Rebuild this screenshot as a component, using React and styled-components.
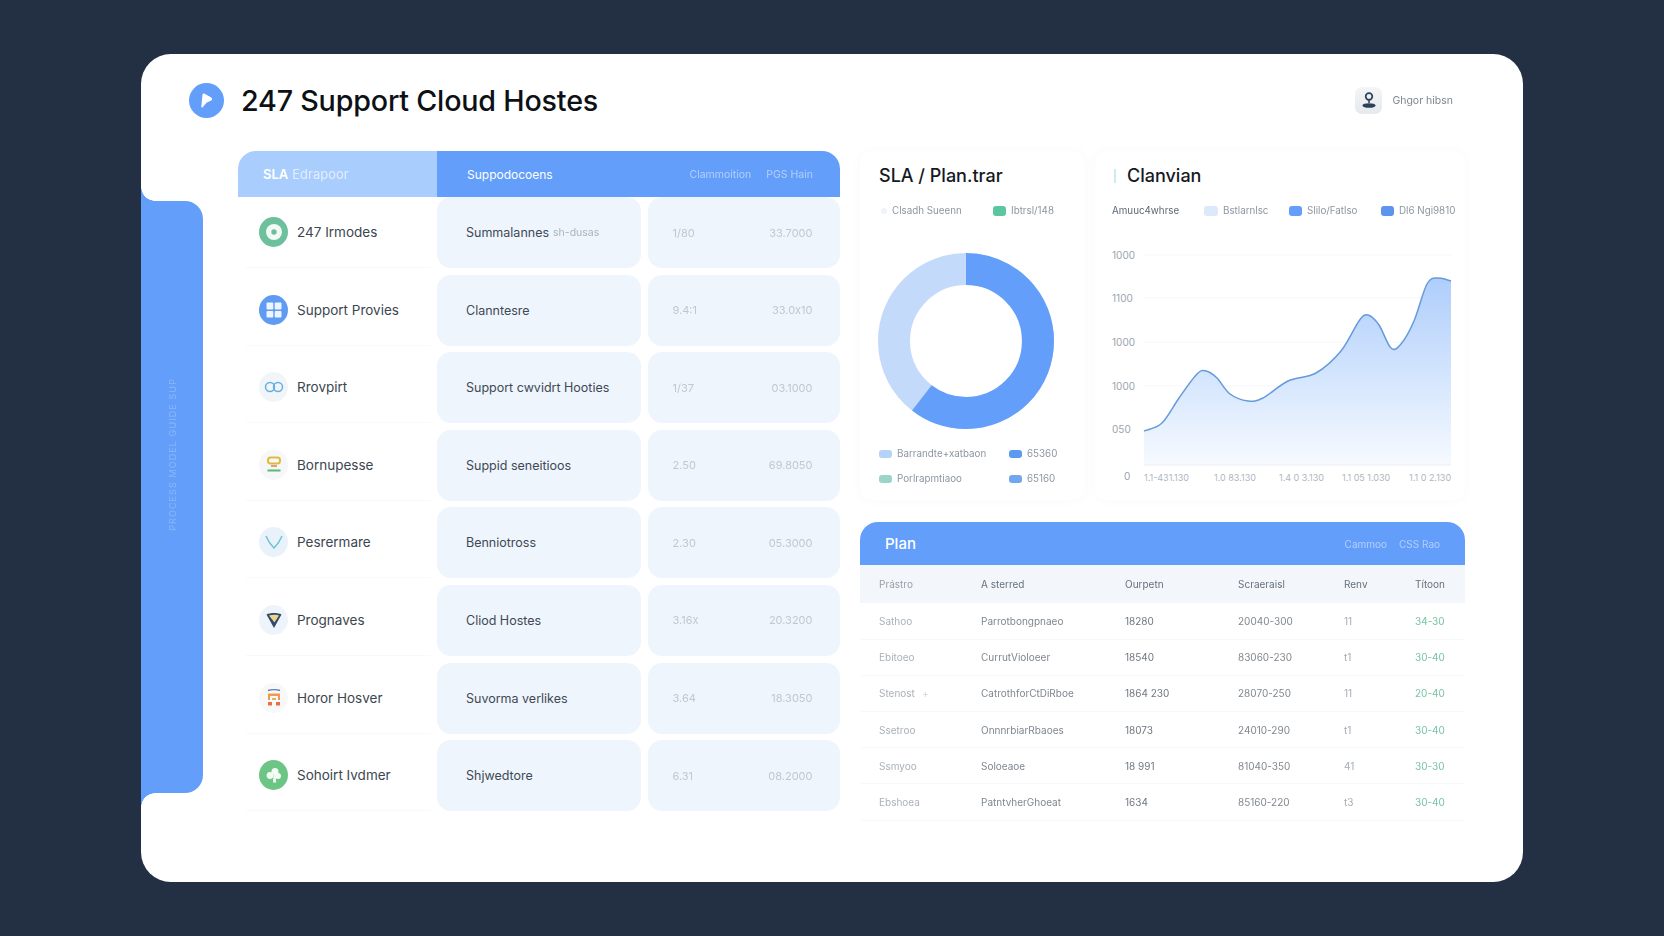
import React from 'react';
import styled, { createGlobalStyle } from 'styled-components';

const Global = createGlobalStyle`
    html, body {
        margin: 0;
        padding: 0;
        background: #233044;
        font-family: "Inter", "Liberation Sans", sans-serif;
    }
`

const Page = styled.div`
    width: 1664px;
    height: 936px;
    box-sizing: border-box;
    padding: 54px 141px;
    overflow: hidden;
`

const Card = styled.div`
    width: 1382px;
    height: 828px;
    background: #fff;
    border-radius: 30px;
    overflow: hidden;
`

const Header = styled.header`
    height: 97px;
    display: flex;
    align-items: center;
    padding: 0 70px 5px 48px;
    box-sizing: border-box;
`

const Logo = styled.div`
    width: 35px;
    height: 35px;
    border-radius: 50%;
    background: #639efa;
    display: flex;
    align-items: center;
    justify-content: center;
`

const Title = styled.h1`
    margin: 0 0 0 17px;
    font-size: 28.7px;
    font-weight: 500;
    letter-spacing: -0.2px;
    color: #0d1116;
`

const User = styled.div`
    margin-left: auto;
    display: flex;
    align-items: center;
    gap: 10px;
    font-size: 10.5px;
    color: #7d8791;
    filter: blur(0.3px);
`

const Avatar = styled.div`
    width: 27px;
    height: 27px;
    border-radius: 7px;
    background: linear-gradient(#f3f5f7, #e6e9ed);
    display: flex;
    align-items: center;
    justify-content: center;
`

const Body = styled.div`
    display: flex;
    align-items: flex-start;
`

const Rail = styled.aside`
    position: relative;
    width: 62px;
    height: 592px;
    margin-top: 50px;
    background: #639efa;
    border-radius: 0 18px 18px 0;
    display: flex;
    align-items: center;
    justify-content: center;

    &::before, &::after {
        content: "";
        position: absolute;
        left: 0;
        width: 14px;
        height: 14px;
    }
    &::before {
        top: -14px;
        background: radial-gradient(circle at 100% 0, #fff 13.5px, #639efa 14px);
    }
    &::after {
        bottom: -14px;
        background: radial-gradient(circle at 100% 100%, #fff 13.5px, #639efa 14px);
    }
`

const RailText = styled.span`
    writing-mode: vertical-rl;
    transform: rotate(180deg);
    font-size: 9px;
    letter-spacing: 1.1px;
    color: rgba(255, 255, 255, 0.26);
    margin-bottom: 85px;
    white-space: nowrap;
    filter: blur(0.4px);
`

const SlaTable = styled.section`
    width: 602px;
    margin-left: 35px;
`

const TableHead = styled.div`
    display: grid;
    grid-template-columns: 199px 1fr;
    height: 46px;
    font-size: 12px;
    color: #fff;
`

const HeadLeft = styled.div`
    background: #a9cdfc;
    border-radius: 18px 0 0 0;
    padding-left: 25px;
    font-size: 13px;
    display: flex;
    align-items: center;
    gap: 4px;

    & b {
        font-weight: 600;
    }
    & span {
        opacity: 0.65;
    }
`

const HeadRight = styled.div`
    background: #639efa;
    border-radius: 0 18px 0 0;
    padding: 0 27px 0 30px;
    display: flex;
    align-items: center;

    & small {
        font-size: 10.5px;
        color: rgba(255, 255, 255, 0.5);
        filter: blur(0.3px);
    }
    & small:first-of-type {
        margin-left: auto;
        margin-right: 15px;
    }
`

const Rows = styled.div`
    display: grid;
    grid-auto-rows: 71px;
    row-gap: 6.6px;
`

const Row = styled.div`
    display: grid;
    grid-template-columns: 192.5px 204px 192px;
    column-gap: 6.5px;
`

const NameCell = styled.div`
    display: flex;
    align-items: center;
    gap: 9px;
    margin-left: 8px;
    padding-left: 13px;
    font-size: 13.5px;
    color: #3c4650;
    border-bottom: 1px solid #f7f9fb;
`

const Badge = styled.div`
    width: 29px;
    height: 30px;
    flex: none;
    border-radius: 50%;
    background: ${(p) => p.$bg};
    display: flex;
    align-items: center;
    justify-content: center;
`

const Pill = styled.div`
    background: #eef5fd;
    border-radius: 14px;
    display: flex;
    align-items: center;
    justify-content: ${(p) => (p.$split ? 'space-between' : 'flex-start')};
    padding: ${(p) => (p.$split ? '0 27px 0 25px' : '0 0 0 29px')};
    font-size: ${(p) => (p.$split ? '11px' : '12.5px')};
    color: ${(p) => (p.$split ? '#bfc8d2' : '#3f4955')};

    & em {
        font-style: normal;
        font-size: 10.5px;
        margin-left: 4px;
        color: #aab4bf;
        filter: blur(0.4px);
    }
    & span {
        filter: blur(0.3px);
    }
`

const RightCol = styled.div`
    width: 605px;
    margin-left: 20px;
`

const Charts = styled.div`
    display: flex;
    gap: 10px;
    height: 349px;
`

const Panel = styled.div`
    box-sizing: border-box;
    width: ${(p) => p.$width}px;
    padding-top: 13px;
    border-radius: 12px;
    box-shadow: 0 0 10px rgba(225, 232, 240, 0.28);
`

const PanelTitle = styled.h2`
    margin: 0;
    padding-left: ${(p) => p.$left}px;
    display: flex;
    align-items: center;
    gap: 11px;
    font-size: 18px;
    line-height: 24px;
    font-weight: 500;
    color: #15191f;

    & i {
        width: 2px;
        height: 14px;
        background: #c8ecf0;
    }
`

const Legend = styled.div`
    height: 12px;
    margin-top: ${(p) => p.$top}px;
    padding-left: ${(p) => p.$left}px;
    display: flex;
    align-items: center;
    font-size: 9.8px;
    line-height: 12px;
    color: #8b96a1;
    filter: blur(0.3px);
`

const LegendItem = styled.span`
    width: ${(p) => p.$width}px;
    flex: none;
    display: flex;
    align-items: center;
    gap: 5px;
    white-space: nowrap;
    color: ${(p) => p.$color || 'inherit'};
`

const Swatch = styled.i`
    width: ${(p) => p.$w || 13}px;
    height: ${(p) => p.$h || 10}px;
    flex: none;
    border-radius: 3px;
    background: ${(p) => p.$color};
`

const DonutWrap = styled.div`
    margin: 36px 0 20px 18px;
    height: 176px;
    line-height: 0;
`

const ChartWrap = styled.div`
    margin-top: 24px;
    line-height: 0;
`

const PlanBox = styled.section`
    margin-top: 22px;
`

const PlanHead = styled.div`
    height: 43px;
    box-sizing: border-box;
    padding: 0 25px;
    background: #639efa;
    border-radius: 18px 18px 0 0;
    display: flex;
    align-items: center;
    color: #fff;
    font-size: 15px;
    font-weight: 500;

    & small {
        font-size: 10px;
        font-weight: 400;
        color: rgba(255, 255, 255, 0.5);
        filter: blur(0.3px);
    }
    & small:first-of-type {
        margin-left: auto;
        margin-right: 12px;
    }
`

const PlanRow = styled.div`
    display: grid;
    grid-template-columns: 102px 144px 113px 106px 71px 1fr;
    align-items: center;
    height: ${(p) => (p.$head ? '38.4px' : '36.2px')};
    box-sizing: border-box;
    padding-left: 19px;
    font-size: 10px;
    background: ${(p) => (p.$head ? '#f3f6fa' : '#fff')};
    border-bottom: ${(p) => (p.$head ? 'none' : '1px solid #f8f9fb')};
`

const PlanCell = styled.span`
    color: ${(p) => p.$color};
    white-space: nowrap;
    filter: blur(0.3px);
`

const Tag = styled.i`
    font-style: normal;
    margin-left: 7px;
    color: #cfd6dc;
`

const BadgeIcon = ({ kind }) => {
    if (kind === 'ring') {
        return (
            <svg width="18" height="18" viewBox="0 0 18 18">
                <circle cx="9" cy="9" r="8" fill="#f2faf6" />
                <circle cx="9" cy="9" r="2.700" fill="#6cbf9a" />
            </svg>
        );
    }
    if (kind === 'grid') {
        return (
            <svg width="18" height="18" viewBox="0 0 18 18" fill="#eef5ff">
                <rect x="1.500" y="1.500" width="6.800" height="7" rx="1" />
                <rect x="9.700" y="1.500" width="6.800" height="7" rx="1" />
                <rect x="1.500" y="10" width="6.800" height="6.500" rx="1" />
                <rect x="9.700" y="10" width="6.800" height="6.500" rx="1" />
            </svg>
        );
    }
    if (kind === 'link') {
        return (
            <svg width="20" height="14" viewBox="0 0 20 14" fill="none" stroke="#62b1e0" strokeWidth="1.500">
                <rect x="1.500" y="2.500" width="9" height="9" rx="4.500" />
                <rect x="9.500" y="2.500" width="9" height="9" rx="4.500" />
            </svg>
        );
    }
    if (kind === 'stack') {
        return (
            <svg width="18" height="20" viewBox="0 0 18 20" fill="none">
                <rect x="3" y="2.500" width="12" height="6" rx="2.500" stroke="#e2b93f" strokeWidth="2" />
                <path d="M6 11h6" stroke="#d98e4b" strokeWidth="1.600" />
                <path d="M2.500 15.500h13" stroke="#58b878" strokeWidth="2" />
            </svg>
        );
    }
    if (kind === 'check') {
        return (
            <svg width="20" height="18" viewBox="0 0 20 18" fill="none" stroke="#67c2d3" strokeWidth="1.400">
                <path d="M2 3C4 8 7 12 10 15C13 12 16 8 18 3" />
            </svg>
        );
    }
    if (kind === 'gem') {
        return (
            <svg width="18" height="18" viewBox="0 0 18 18">
                <path d="M1.500 3.500C5 1.500 13 1.500 16.500 3.500L9 17z" fill="#33496b" />
                <path d="M4 4.500C7 3.500 12 3.500 14 4.500L9.500 11.500z" fill="#ecd68f" />
            </svg>
        );
    }
    if (kind === 'bars') {
        return (
            <svg width="16" height="20" viewBox="0 0 16 20" fill="none">
                <path d="M2 2.500C5 1.500 11 1.500 14 2.500" stroke="#5b7fc0" strokeWidth="1.400" />
                <rect x="2" y="5.500" width="12" height="2.500" fill="#ef9a4d" />
                <path d="M3 8v4M13 8v4" stroke="#ef9a4d" strokeWidth="2" />
                <rect x="6" y="10" width="4" height="2" fill="#e1b45a" />
                <rect x="2" y="14" width="4" height="3.500" fill="#e86f45" />
                <rect x="10" y="14" width="4" height="3.500" fill="#e86f45" />
            </svg>
        );
    }
    return (
        <svg width="18" height="18" viewBox="0 0 18 18" fill="#f2fbf4">
            <circle cx="5" cy="9.500" r="3.400" />
            <circle cx="10" cy="5.500" r="3.500" />
            <circle cx="13" cy="10" r="3" />
            <path d="M8.500 8h2l.7 8.500H8z" />
        </svg>
    );
};

const slaRows = [
    { icon: 'ring', bg: '#6cc09c', name: '247 Irmodes', plan: 'Summalannes', note: 'sh-dusas', a: '1/80', b: '33.7000' },
    { icon: 'grid', bg: '#5f9bf3', name: 'Support Provies', plan: 'Clanntesre', a: '9.4:1', b: '33.0x10' },
    { icon: 'link', bg: '#f2f5f8', name: 'Rrovpirt', plan: 'Support cwvidrt Hooties', a: '1/37', b: '03.1000' },
    { icon: 'stack', bg: '#f5f7f8', name: 'Bornupesse', plan: 'Suppid seneitioos', a: '2.50', b: '69.8050' },
    { icon: 'check', bg: '#e9f2fb', name: 'Pesrermare', plan: 'Benniotross', a: '2.30', b: '05.3000' },
    { icon: 'gem', bg: '#eef4fb', name: 'Prognaves', plan: 'Cliod Hostes', a: '3.16x', b: '20.3200' },
    { icon: 'bars', bg: '#f8f8f9', name: 'Horor Hosver', plan: 'Suvorma verlikes', a: '3.64', b: '18.3050' },
    { icon: 'clover', bg: '#6cc485', name: 'Sohoirt Ivdmer', plan: 'Shjwedtore', a: '6.31', b: '08.2000' },
];

const planRows = [
    ['Sathoo', 'Parrotbongpnaeo', '18280', '20040-300', '11', '34-30'],
    ['Ebitoeo', 'CurrutVioloeer', '18540', '83060-230', 't1', '30-40'],
    ['Stenost', 'CatrothforCtDiRboe', '1864 230', '28070-250', '11', '20-40'],
    ['Ssetroo', 'OnnnrbiarRbaoes', '18073', '24010-290', 't1', '30-40'],
    ['Ssmyoo', 'Soloeaoe', '18 991', '81040-350', '41', '30-30'],
    ['Ebshoea', 'PatntvherGhoeat', '1634', '85160-220', 't3', '30-40'],
];

const planColors = ['#aab1b9', '#7f8790', '#6f7780', '#80888f', '#a5adb5', '#79c4a4'];

// measured points of the area line, in chart coordinates
const linePoints = [
    [49, 190], [67, 182], [84, 157], [102, 133], [111, 130], [122, 137], [135, 153], [153, 160],
    [168, 157], [193, 140], [221, 132], [246, 110], [264, 80], [273, 74], [284, 84], [296, 107],
    [306, 103], [319, 80], [332, 43], [343, 37], [356, 40],
];

const smooth = (pts) => {
    let d = `M${pts[0][0]} ${pts[0][1]}`;
    for (let i = 0; i < pts.length - 1; i++) {
        const p0 = pts[i - 1] || pts[i];
        const p1 = pts[i];
        const p2 = pts[i + 1];
        const p3 = pts[i + 2] || p2;
        const c1 = [p1[0] + (p2[0] - p0[0]) / 6, p1[1] + (p2[1] - p0[1]) / 6];
        const c2 = [p2[0] - (p3[0] - p1[0]) / 6, p2[1] - (p3[1] - p1[1]) / 6];
        d += ` C${c1[0].toFixed(1)} ${c1[1].toFixed(1)} ${c2[0].toFixed(1)} ${c2[1].toFixed(1)} ${p2[0]} ${p2[1]}`;
    }
    return d;
};

const AreaChart = () => {
    const line = smooth(linePoints);
    const yLabels = [['1000', 18], ['1100', 61], ['1000', 105], ['1000', 149], ['050', 192]];
    const xLabels = [['1.1-431.130', 49], ['1.0 83.130', 119], ['1.4 0 3.130', 184], ['1.1 05 1.030', 247], ['1.1 0 2.130', 314]];
    return (
        <svg width="370" height="250" viewBox="0 0 370 250" style={{ display: 'block', fontFamily: 'Inter, sans-serif' }}>
            <defs>
                <linearGradient id="areaFill" x1="0" y1="0" x2="0" y2="1">
                    <stop offset="0" stopColor="#aecefb" />
                    <stop offset="1" stopColor="#f6faff" />
                </linearGradient>
            </defs>
            {yLabels.map(([t, y], i) => (
                <g key={i}>
                    <line x1="49" x2="356" y1={y - 4} y2={y - 4} stroke="#f5f7fa" />
                    <text x="17" y={y} fontSize="10" fill="#9aa4ae">{t}</text>
                </g>
            ))}
            <path d={`${line} L356 224 L49 224 Z`} fill="url(#areaFill)" />
            <path d={line} fill="none" stroke="#669ada" strokeWidth="1.500" />
            <line x1="49" x2="356" y1="224" y2="224" stroke="#eaeef3" />
            <text x="29" y="239" fontSize="10" fill="#9aa4ae">0</text>
            {xLabels.map(([t, x], i) => (
                <text key={i} x={x} y="240" fontSize="9" fill="#aeb6bf">{t}</text>
            ))}
        </svg>
    );
};

export default function App() {
    return (
        <>
            <Global />
            <Page>
                <Card>
                    <Header>
                        <Logo>
                            <svg width="19" height="19" viewBox="0 0 19 19">
                                <path d="M5.500 3.500c.1-.9.900-1.300 1.700-.9l7 3.800c1.300.7 1.300 2.300 0 3l-4.700 2.400-3.600 4.300c-.7.800-1.700.3-1.600-.7z" fill="#fff" />
                            </svg>
                        </Logo>
                        <Title>247 Support Cloud Hostes</Title>
                        <User>
                            <Avatar>
                                <svg width="18" height="20" viewBox="0 0 18 20" fill="none">
                                    <circle cx="9" cy="6.500" r="3.300" stroke="#2c405c" strokeWidth="1.700" />
                                    <path d="M9 10v3" stroke="#2c405c" strokeWidth="1.500" />
                                    <ellipse cx="9" cy="15.500" rx="6.500" ry="2.300" fill="#2c405c" />
                                </svg>
                            </Avatar>
                            Ghgor hibsn
                        </User>
                    </Header>
                    <Body>
                        <Rail>
                            <RailText>PROCESS MODEL GUIDE SUP</RailText>
                        </Rail>
                        <SlaTable>
                            <TableHead>
                                <HeadLeft><b>SLA</b><span>Edrapoor</span></HeadLeft>
                                <HeadRight>
                                    Suppodocoens
                                    <small>Clammoition</small>
                                    <small>PGS Hain</small>
                                </HeadRight>
                            </TableHead>
                            <Rows>
                                {slaRows.map((r) => (
                                    <Row key={r.name}>
                                        <NameCell>
                                            <Badge $bg={r.bg}><BadgeIcon kind={r.icon} /></Badge>
                                            {r.name}
                                        </NameCell>
                                        <Pill>{r.plan}{r.note && <em>{r.note}</em>}</Pill>
                                        <Pill $split><span>{r.a}</span><span>{r.b}</span></Pill>
                                    </Row>
                                ))}
                            </Rows>
                        </SlaTable>
                        <RightCol>
                            <Charts>
                                <Panel $width={225}>
                                    <PanelTitle $left={19}>SLA / Plan.trar</PanelTitle>
                                    <Legend $top={17} $left={21}>
                                        <LegendItem $width={112}>
                                            <Swatch $w={6} $h={6} $color="#f0f3f6" />Clsadh Sueenn
                                        </LegendItem>
                                        <LegendItem $width={80}>
                                            <Swatch $color="#5cc6a0" />Ibtrsl/148
                                        </LegendItem>
                                    </Legend>
                                    <DonutWrap>
                                        <svg width="176" height="176" viewBox="0 0 176 176">
                                            <circle cx="88" cy="88" r="72" fill="none" stroke="#c4dafa" strokeWidth="32" />
                                            <circle
                                                cx="88"
                                                cy="88"
                                                r="72"
                                                fill="none"
                                                stroke="#639efa"
                                                strokeWidth="32"
                                                strokeDasharray="273.300 452.400"
                                                transform="rotate(-90 88 88)"
                                            />
                                        </svg>
                                    </DonutWrap>
                                    <Legend $top={-1} $left={19}>
                                        <LegendItem $width={130}>
                                            <Swatch $h={8} $color="#b5d2f8" />Barrandte+xatbaon
                                        </LegendItem>
                                        <LegendItem $width={60}>
                                            <Swatch $h={8} $color="#5b9af0" />65360
                                        </LegendItem>
                                    </Legend>
                                    <Legend $top={13} $left={19}>
                                        <LegendItem $width={130}>
                                            <Swatch $h={8} $color="#9bd4c8" />Porlrapmtiaoo
                                        </LegendItem>
                                        <LegendItem $width={60}>
                                            <Swatch $h={8} $color="#72a6ee" />65160
                                        </LegendItem>
                                    </Legend>
                                </Panel>
                                <Panel $width={370}>
                                    <PanelTitle $left={19}><i />Clanvian</PanelTitle>
                                    <Legend $top={17} $left={17}>
                                        <LegendItem $width={92} $color="#5d6873">Amuuc4whrse</LegendItem>
                                        <LegendItem $width={85}>
                                            <Swatch $w={14} $color="#dbe9fb" />Bstlarnlsc
                                        </LegendItem>
                                        <LegendItem $width={92}>
                                            <Swatch $color="#639efa" />Slilo/Fatlso
                                        </LegendItem>
                                        <LegendItem $width={70}>
                                            <Swatch $color="#5d95ee" />Dl6 Ngi9810
                                        </LegendItem>
                                    </Legend>
                                    <ChartWrap>
                                        <AreaChart />
                                    </ChartWrap>
                                </Panel>
                            </Charts>
                            <PlanBox>
                                <PlanHead>
                                    Plan
                                    <small>Cammoo</small>
                                    <small>CSS Rao</small>
                                </PlanHead>
                                <PlanRow $head>
                                    {['Prástro', 'A sterred', 'Ourpetn', 'Scraeraisl', 'Renv', 'Títoon'].map((h, i) => (
                                        <PlanCell key={h} $color={i === 0 ? '#98a1aa' : '#67717c'}>{h}</PlanCell>
                                    ))}
                                </PlanRow>
                                {planRows.map((row) => (
                                    <PlanRow key={row[0]}>
                                        {row.map((c, i) => (
                                            <PlanCell key={i} $color={planColors[i]}>
                                                {c}{c === 'Stenost' && <Tag>+</Tag>}
                                            </PlanCell>
                                        ))}
                                    </PlanRow>
                                ))}
                            </PlanBox>
                        </RightCol>
                    </Body>
                </Card>
            </Page>
        </>
    );
}
